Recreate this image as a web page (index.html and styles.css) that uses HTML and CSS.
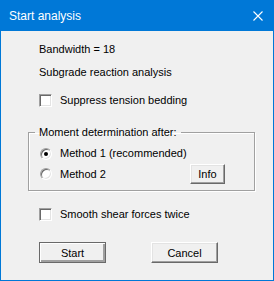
FILE: index.html
```html
<!DOCTYPE html>
<html lang="en">
<head>
  <meta charset="UTF-8">
  <title>Start analysis</title>
  <link rel="stylesheet" href="styles.css">
</head>
<body>
  <!-- dialog window -->
  <div class="window">
    <div class="titlebar">
      <span class="title">Start analysis</span>
      <button class="close-button" aria-label="Close">
        <svg width="10" height="10" viewBox="0 0 10 10">
          <path d="M0.5 0.5 L9.5 9.5 M9.5 0.5 L0.5 9.5" stroke="#fff" stroke-width="1.1" fill="none"/>
        </svg>
      </button>
    </div>

    <div class="dialog">
      <p class="line first">Bandwidth = 18</p>
      <p class="line second">Subgrade reaction analysis</p>

      <label class="check-row suppress">
        <span class="checkbox"></span>
        Suppress tension bedding
      </label>

      <!-- moment group -->
      <fieldset class="group">
        <legend>Moment determination after:</legend>
        <label class="radio-row">
          <span class="radio checked"></span>
          Method 1 (recommended)
        </label>
        <div class="radio-line">
          <label class="radio-row">
            <span class="radio"></span>
            Method 2
          </label>
          <button class="win-button info">Info</button>
        </div>
      </fieldset>

      <label class="check-row smooth">
        <span class="checkbox"></span>
        Smooth shear forces twice
      </label>

      <div class="buttons">
        <button class="win-button default">Start</button>
        <button class="win-button">Cancel</button>
      </div>
    </div>
  </div>
</body>
</html>
```

FILE: styles.css
```css
body {
  margin: 0;
  background-color: #f0f0f0;
  font-family: "Liberation Sans", Arial, sans-serif;
  font-size: 11px;
  color: #000;
}

/* window frame */
.window {
  width: 274px;
  height: 281px;
  box-sizing: border-box;
  border: 1px solid #0078d7;
  border-top: none;
  background-color: #f0f0f0;
}

.titlebar {
  height: 31px;
  background-color: #0078d7;
  display: flex;
  align-items: center;
  justify-content: space-between;
  padding: 0 10px 0 8px;
}

.title {
  color: white;
  font-size: 12px;
  margin-top: 1px;
}

.close-button {
  background: transparent;
  border: none;
  padding: 0;
  width: 10px;
  height: 10px;
  display: flex;
  margin-top: 1px;
}

/* dialog content */
.dialog {
  padding: 0 18px 0 27px;
  display: flex;
  flex-direction: column;
}

.line {
  margin: 0 0 0 11px;
  line-height: 13px;
}

.line.first {
  margin-top: 12px;
}

.line.second {
  margin-top: 10px;
}

.check-row {
  display: flex;
  align-items: center;
  gap: 8px;
  margin-left: 11px;
  height: 13px;
  line-height: 13px;
}

.check-row.suppress {
  margin-top: 15px;
}

.check-row.smooth {
  margin-top: 17px;
}

/* classic sunken checkbox */
.checkbox {
  width: 13px;
  height: 13px;
  box-sizing: border-box;
  background-color: white;
  border-top: 1px solid #a0a0a0;
  border-left: 1px solid #a0a0a0;
  border-right: 1px solid #fff;
  border-bottom: 1px solid #fff;
  box-shadow: inset 1px 1px #696969, inset -1px -1px #e3e3e3;
}

/* group box */
.group {
  margin: 19px 0 0 0;
  padding: 0 29px 6px 6px;
  border: 1px solid #a0a0a0;
  box-shadow: inset 1px 1px #fff, 1px 1px #fff;
  min-width: 0;
}

.group legend {
  padding: 0 4px;
  line-height: 13px;
}

.radio-row {
  display: flex;
  align-items: center;
  gap: 8px;
  margin-left: 5px;
  height: 13px;
  line-height: 13px;
}

.group > .radio-row {
  margin-top: 8px;
}

.radio-line {
  display: flex;
  align-items: center;
  justify-content: space-between;
  margin-top: 4px;
}

.radio {
  width: 12px;
  height: 12px;
  box-sizing: border-box;
  border-radius: 50%;
  background-color: white;
  border: 1px solid;
  border-color: #a0a0a0 #fff #fff #a0a0a0;
  box-shadow: inset 1px 1px #696969, inset -1px -1px #e3e3e3;
  display: flex;
  align-items: center;
  justify-content: center;
}

.radio.checked::after {
  content: '';
  width: 4px;
  height: 4px;
  border-radius: 50%;
  background-color: #000;
}

/* classic push buttons */
.win-button {
  font-family: inherit;
  font-size: 11px;
  color: #000;
  background-color: #f0f0f0;
  box-sizing: border-box;
  border: 1px solid;
  border-color: #fff #696969 #696969 #fff;
  box-shadow: inset -1px -1px #a0a0a0, inset 1px 1px #e3e3e3;
  padding: 0;
  height: 20px;
  line-height: 16px;
}

.win-button.info {
  width: 35px;
}

.buttons {
  display: flex;
  gap: 45px;
  margin: 21px 0 0 11px;
}

.buttons .win-button {
  width: 67px;
  height: 21px;
}

.win-button.default {
  border-color: #696969;
  box-shadow: inset 1px 1px #fff, inset -1px -1px #a0a0a0, inset -2px -2px #a0a0a0;
}
```
